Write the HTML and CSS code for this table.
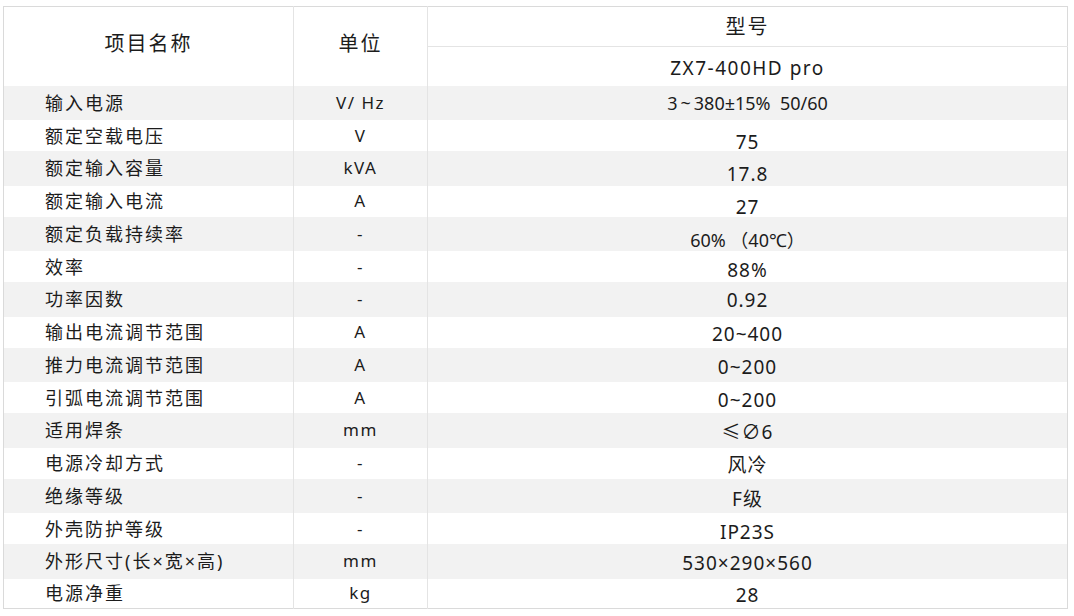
FILE: index.html
```html
<!DOCTYPE html>
<html lang="zh-CN">
<head>
<meta charset="utf-8">
<title>ZX7-400HD pro 技术参数</title>
<link rel="stylesheet" href="styles.css">
</head>
<body>
<table class="spec">
  <colgroup>
    <col class="c-name">
    <col class="c-unit">
    <col class="c-val">
  </colgroup>
  <thead>
    <tr class="h1">
      <th rowspan="2" class="hname">项目名称</th>
      <th rowspan="2" class="hunit">单位</th>
      <th class="hval">型号</th>
    </tr>
    <tr class="h2">
      <th class="hmodel">ZX7-400HD pro</th>
    </tr>
  </thead>
  <tbody>
    <tr class="g"><td class="name">输入电源</td><td class="unit">V/ Hz</td><td class="val hi tight">3&thinsp;~&thinsp;380±15%&nbsp;&nbsp;50/60</td></tr>
    <tr class="w"><td class="name">额定空载电压</td><td class="unit">V</td><td class="val lo">75</td></tr>
    <tr class="g"><td class="name">额定输入容量</td><td class="unit">kVA</td><td class="val lo">17.8</td></tr>
    <tr class="w"><td class="name">额定输入电流</td><td class="unit">A</td><td class="val lo">27</td></tr>
    <tr class="g"><td class="name">额定负载持续率</td><td class="unit">-</td><td class="val lo tight">60%&nbsp;（40℃）</td></tr>
    <tr class="w"><td class="name">效率</td><td class="unit">-</td><td class="val mid">88%</td></tr>
    <tr class="g"><td class="name">功率因数</td><td class="unit">-</td><td class="val hi">0.92</td></tr>
    <tr class="w"><td class="name">输出电流调节范围</td><td class="unit">A</td><td class="val">20~400</td></tr>
    <tr class="g"><td class="name">推力电流调节范围</td><td class="unit">A</td><td class="val">0~200</td></tr>
    <tr class="w"><td class="name">引弧电流调节范围</td><td class="unit">A</td><td class="val">0~200</td></tr>
    <tr class="g"><td class="name">适用焊条</td><td class="unit">mm</td><td class="val">≤∅6</td></tr>
    <tr class="w"><td class="name">电源冷却方式</td><td class="unit">-</td><td class="val">风冷</td></tr>
    <tr class="g"><td class="name">绝缘等级</td><td class="unit">-</td><td class="val mid">F级</td></tr>
    <tr class="w"><td class="name">外壳防护等级</td><td class="unit">-</td><td class="val mid">IP23S</td></tr>
    <tr class="g"><td class="name">外形尺寸(长×宽×高)</td><td class="unit">mm</td><td class="val">530×290×560</td></tr>
    <tr class="w last"><td class="name">电源净重</td><td class="unit">kg</td><td class="val">28</td></tr>
  </tbody>
</table>
</body>
</html>
```

FILE: styles.css
```css
html, body {
  margin: 0;
  padding: 0;
  background: #ffffff;
}

body {
  font-family: "Noto Sans", "Noto Sans CJK SC", sans-serif;
  color: #1c1c1c;
}

.spec {
  margin: 6px 0 0 3px;
  width: 1064px;
  border-collapse: collapse;
  table-layout: fixed;
  border: 1px solid #dadada;
}

.c-name { width: 290px; }
.c-unit { width: 134px; }
.c-val { width: 640px; }

th, td {
  padding: 0;
  font-weight: 400;
  vertical-align: middle;
  line-height: 18px;
}

th {
  font-size: 20px;
  letter-spacing: 2px;
  text-align: center;
}

.hname,
.hunit {
  border-right: 1px solid #e4e4e4;
  padding-bottom: 4px;
}

.h1 { height: 40px; }
.h2 { height: 39px; }

.hval {
  border-bottom: 1px solid #e4e4e4;
}

.hmodel {
  font-size: 19px;
  letter-spacing: 1.5px;
  padding-top: 4px;
}

td {
  font-size: 17px;
}

.g { height: 34.5px; background: #f2f2f2; }
.w { height: 31px; background: #ffffff; }
.w.last { height: 30px; }

.name {
  text-align: left;
  padding-left: 41px;
  font-size: 18px;
  letter-spacing: 2px;
  border-right: 1px solid #e4e4e4;
}

.unit {
  text-align: center;
  border-right: 1px solid #e4e4e4;
  letter-spacing: 1.5px;
}

.val {
  text-align: center;
  font-size: 19px;
  letter-spacing: 1px;
  padding-top: 4px;
}

.val.tight { letter-spacing: 0; font-size: 18px; }

.val.hi { padding-top: 1px; }
.val.mid { padding-top: 7px; }
.val.lo { padding-top: 12px; }
```
